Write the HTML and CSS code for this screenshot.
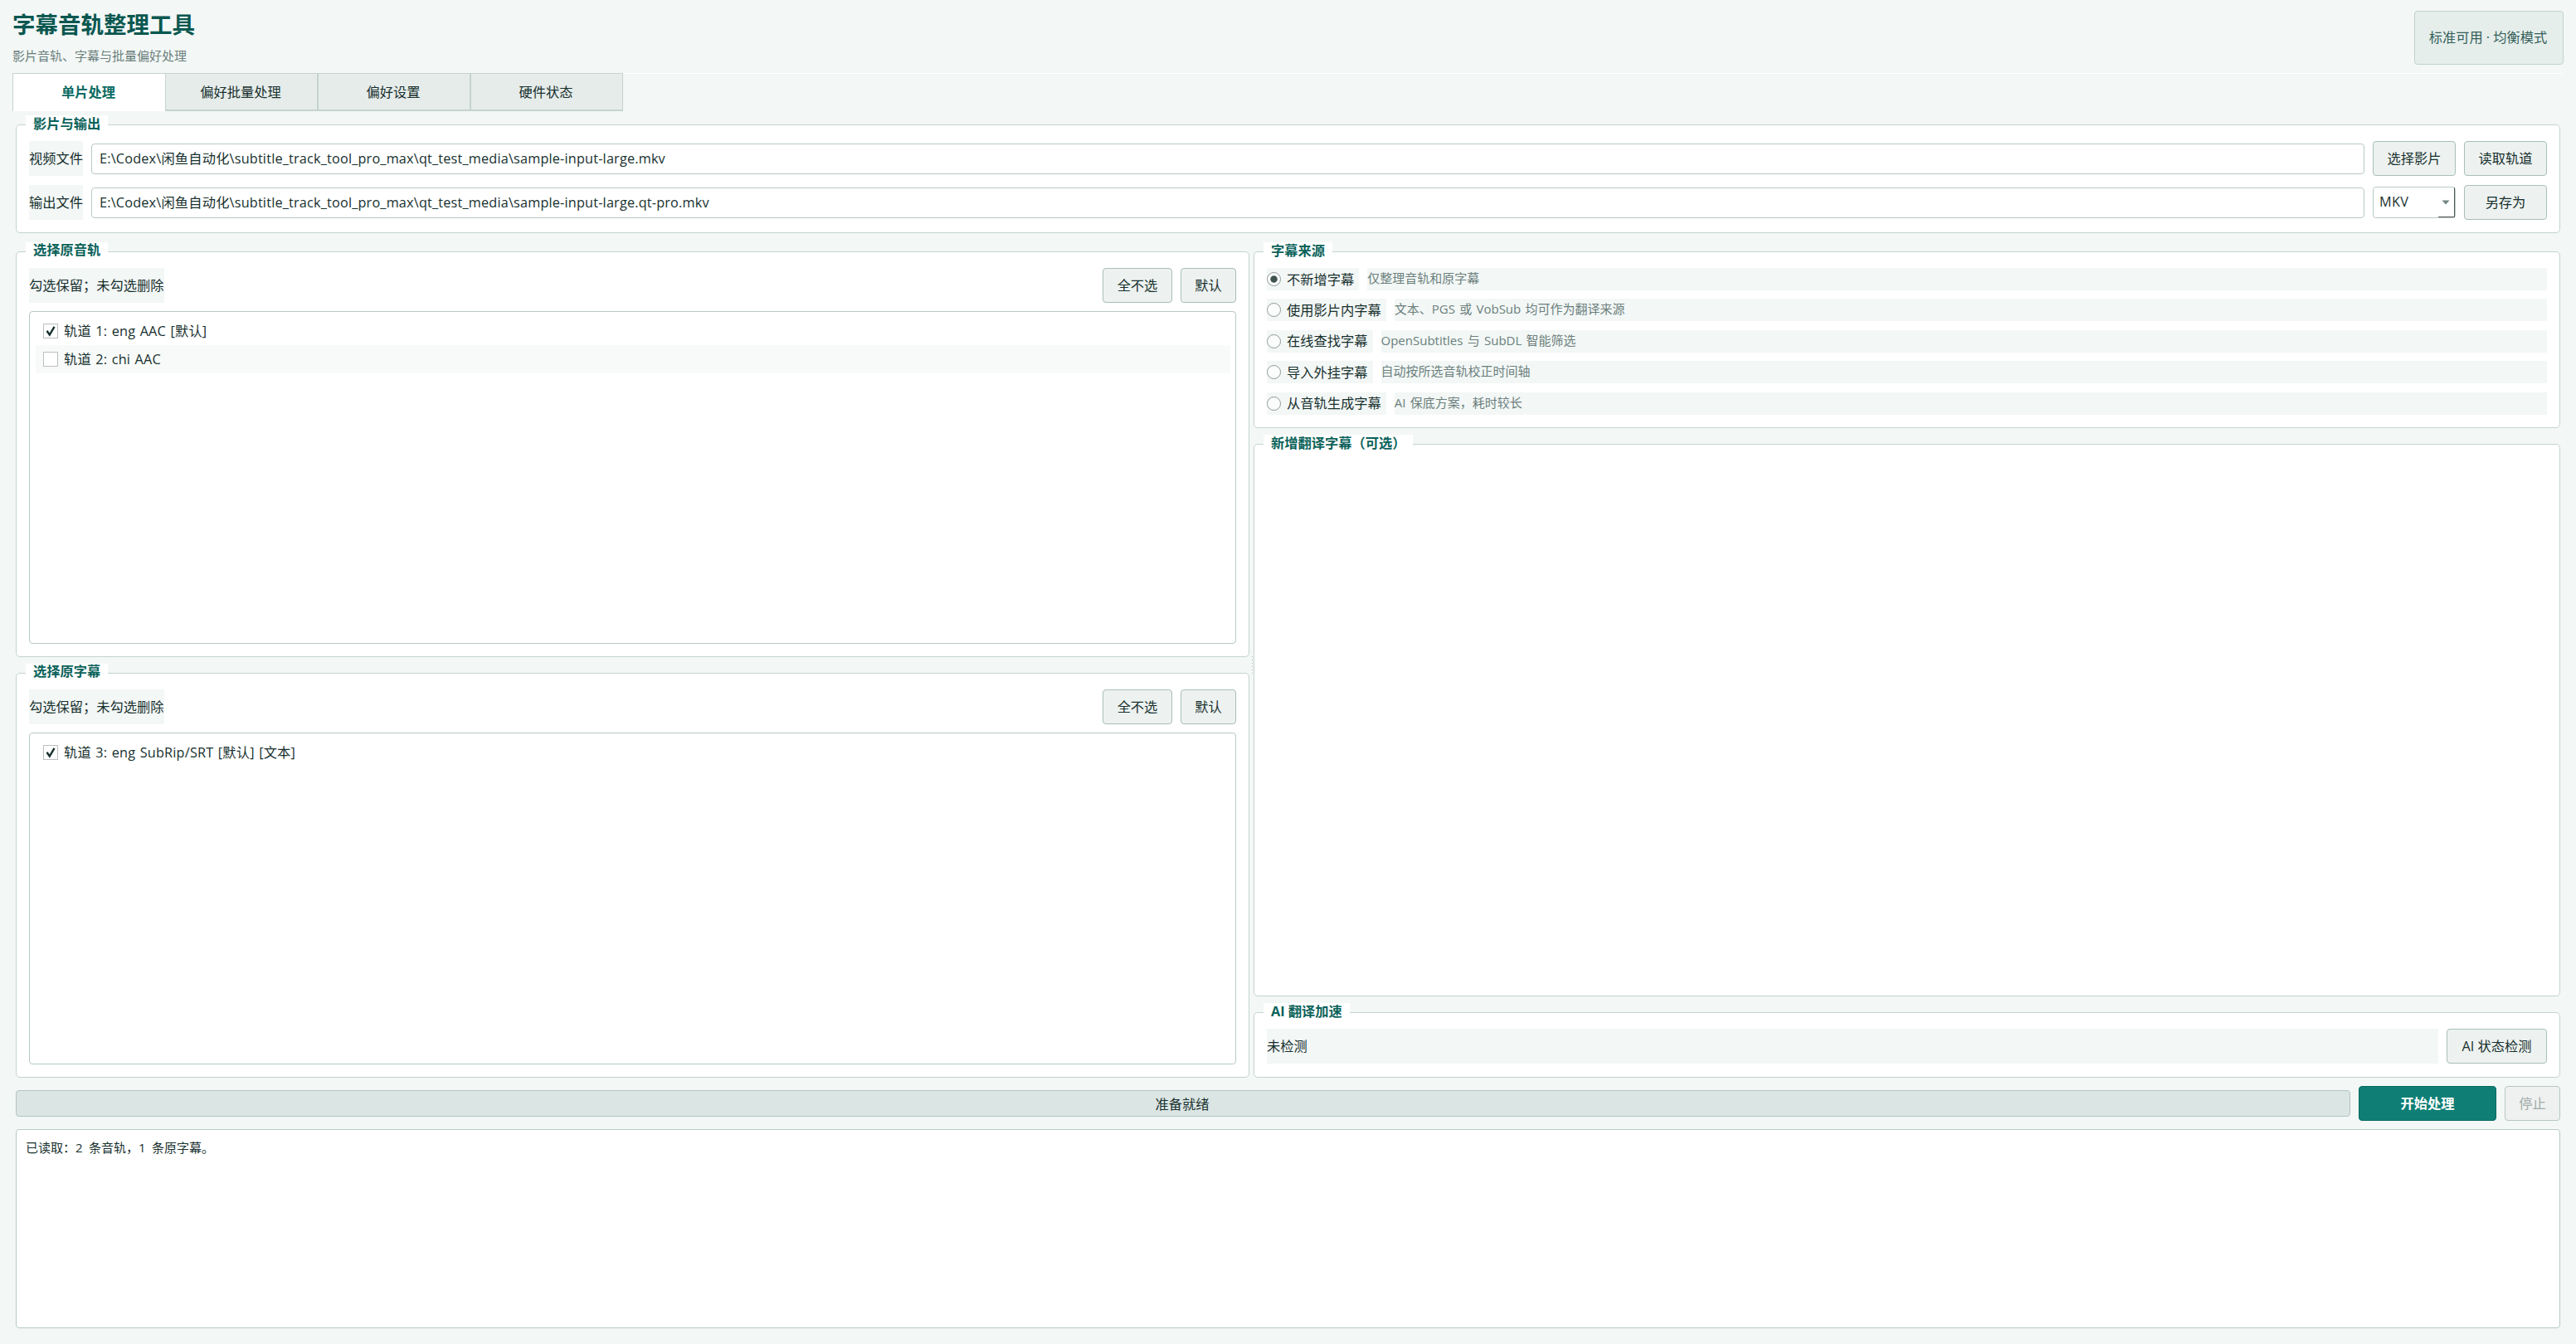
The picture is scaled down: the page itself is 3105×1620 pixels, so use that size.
FILE: index.html
```html
<!DOCTYPE html>
<html lang="zh-CN">
<head>
  <meta charset="UTF-8" />
  <meta name="viewport" content="width=device-width, initial-scale=1.0"/>
  <title>字幕音轨整理工具</title>
  <link rel="stylesheet" href="styles.css">
</head>
<body>
  <header class="header">
    <div>
      <h1>字幕音轨整理工具</h1>
      <p class="subtitle">影片音轨、字幕与批量偏好处理</p>
    </div>
    <div class="status">标准可用 · 均衡模式</div>
  </header>

  <nav class="tabs">
    <a class="tab active">单片处理</a>
    <a class="tab">偏好批量处理</a>
    <a class="tab">偏好设置</a>
    <a class="tab">硬件状态</a>
  </nav>

  <main>
    <section class="group files">
      <h2>影片与输出</h2>
      <label class="label">视频文件</label>
      <div class="field"><span class="path">E:\Codex\闲鱼自动化\subtitle_track_tool_pro_max\qt_test_media\sample-input-large.mkv</span></div>
      <button class="btn">选择影片</button>
      <button class="btn">读取轨道</button>
      <label class="label">输出文件</label>
      <div class="field"><span class="path">E:\Codex\闲鱼自动化\subtitle_track_tool_pro_max\qt_test_media\sample-input-large.qt-pro.mkv</span></div>
      <div class="combo">
        <span>MKV</span>
        <i class="combo-drop"><svg width="10" height="6" viewBox="0 0 10 6"><path d="M0.5 0.5h9L5 5.5z" fill="#6f8582"/></svg></i>
      </div>
      <button class="btn">另存为</button>
    </section>

    <div class="columns">
      <div class="col col-left">
        <section class="group tracks">
          <h2>选择原音轨</h2>
          <div class="row">
            <span class="label">勾选保留；未勾选删除</span>
            <button class="btn none">全不选</button>
            <button class="btn default">默认</button>
          </div>
          <ul class="list">
            <li><span class="check"><svg width="12" height="14" viewBox="0 0 12 14"><path d="M1.5 6.8l3.3 4.7L10.5 1.8" fill="none" stroke="#17302e" stroke-width="2.4"/></svg></span>轨道 1: eng AAC [默认]</li>
            <li><span class="check"></span>轨道 2: chi AAC</li>
          </ul>
        </section>
        <section class="group tracks">
          <h2>选择原字幕</h2>
          <div class="row">
            <span class="label">勾选保留；未勾选删除</span>
            <button class="btn none">全不选</button>
            <button class="btn default">默认</button>
          </div>
          <ul class="list">
            <li><span class="check"><svg width="12" height="14" viewBox="0 0 12 14"><path d="M1.5 6.8l3.3 4.7L10.5 1.8" fill="none" stroke="#17302e" stroke-width="2.4"/></svg></span>轨道 3: eng SubRip/SRT [默认] [文本]</li>
          </ul>
        </section>
      </div>

      <div class="splitter"></div>

      <div class="col col-right">
        <section class="group source">
          <h2>字幕来源</h2>
          <div class="option"><label class="radio checked"><i></i>不新增字幕</label><span class="hint">仅整理音轨和原字幕</span></div>
          <div class="option"><label class="radio"><i></i>使用影片内字幕</label><span class="hint">文本、PGS 或 VobSub 均可作为翻译来源</span></div>
          <div class="option"><label class="radio"><i></i>在线查找字幕</label><span class="hint">OpenSubtitles 与 SubDL 智能筛选</span></div>
          <div class="option"><label class="radio"><i></i>导入外挂字幕</label><span class="hint">自动按所选音轨校正时间轴</span></div>
          <div class="option"><label class="radio"><i></i>从音轨生成字幕</label><span class="hint">AI 保底方案，耗时较长</span></div>
        </section>
        <section class="group translate">
          <h2 class="wide">新增翻译字幕（可选）</h2>
        </section>
        <section class="group accel">
          <h2>AI 翻译加速</h2>
          <div class="row">
            <span class="label grow">未检测</span>
            <button class="btn detect">AI 状态检测</button>
          </div>
        </section>
      </div>
    </div>

    <div class="actions">
      <div class="progress">准备就绪</div>
      <button class="btn start">开始处理</button>
      <button class="btn stop" disabled>停止</button>
    </div>

    <div class="log">已读取：<b>2</b>条音轨，<b>1</b>条原字幕。</div>
  </main>
</body>
</html>
```
FILE: styles.css
```css
* {
  box-sizing: border-box;
}
body {
  margin: 0;
  width: 3105px;
  height: 1620px;
  overflow: hidden;
  background: #f3f7f6;
  color: #17302e;
  font-family: "Open Sans", "Noto Sans CJK SC", sans-serif;
  font-size: 16.25px;
  line-height: 24px;
}
h1, h2, p, ul {
  margin: 0;
  padding: 0;
}
.header {
  display: flex;
  justify-content: space-between;
  height: 88px;
  padding: 13px 15px 0;
}
h1 {
  font-size: 27.5px;
  line-height: 34px;
  color: #0b5750;
}
.subtitle {
  margin-top: 8px;
  font-size: 15px;
  color: #6b7f7c;
}
.status {
  width: 180px;
  height: 65px;
  padding-right: 2px;
  border: 1px solid #c0d2ce;
  border-radius: 4px;
  background: #e5eeeb;
  color: #355f5a;
  line-height: 63px;
  text-align: center;
}

.tabs {
  display: flex;
  height: 46px;
  margin: 0 15px;
  background: linear-gradient(#fff, #fff) no-repeat 0 0 / 100% 1px;
}
.tab {
  width: 184px;
  padding-right: 2px;
  border: 1px solid #c5d3d0;
  border-bottom-width: 2px;
  background: #e6ecea;
  line-height: 45px;
  text-align: center;
}
.tab.active {
  background: #fff;
  border-right: none;
  border-bottom: none;
  color: #0b6b62;
  font-weight: bold;
}

main {
  padding: 16px 19px 0;
}
.group {
  position: relative;
  border: 1px solid #c3d4d0;
  border-radius: 5px;
  background: #fff;
  padding: 19px 15px 15px;
}
/* group title sits on top of the border */
.group h2 {
  position: absolute;
  top: -12px;
  left: 11px;
  height: 21px;
  padding: 0 9px;
  background: #fff;
  color: #0b625a;
  font-size: 16.25px;
  line-height: 20px;
  white-space: nowrap;
}
.group h2.wide {
  width: 180px;
}
.tracks h2 {
  line-height: 19px;
}

.label {
  height: 42px;
  background: #f3f7f6;
  line-height: 42px;
  white-space: nowrap;
}
.grow {
  flex: 1;
}
.btn {
  height: 42px;
  padding: 0;
  border: 1px solid #a9beb9;
  border-radius: 4px;
  background: #edf2f0;
  color: #17302e;
  font: inherit;
  white-space: nowrap;
}

.files {
  display: grid;
  grid-template-columns: 65px 1fr 100px 100px;
  gap: 11px 10px;
  align-items: center;
  height: 131px;
}
.field, .combo {
  height: 37px;
  border: 1px solid #b8cac6;
  border-radius: 4px;
  background: #fff;
  padding: 0 9px;
  line-height: 35px;
}
.path {
  letter-spacing: 0.18px;
}
.combo {
  position: relative;
  height: 38px;
  padding: 0 7px;
  letter-spacing: 0.3px;
}
.combo-drop {
  position: absolute;
  right: 0;
  top: 0;
  width: 20px;
  height: 36px;
  border-right: 1px solid #505655;
  border-bottom: 1px solid #505655;
}
.combo-drop svg {
  position: absolute;
  left: 4px;
  top: 15px;
}

.columns {
  display: flex;
  height: 996px;
  margin-top: 22px;
}
.col {
  display: flex;
  flex-direction: column;
}
.col-left {
  width: 1487px;
  gap: 19px;
}
.col-right {
  flex: 1;
  gap: 19px;
}
.splitter {
  width: 5px;
  display: flex;
  align-items: center;
  justify-content: flex-end;
  padding-right: 1px;
}
.splitter::after {
  content: "";
  width: 1px;
  height: 21px;
  background: repeating-linear-gradient(#a9b3b1 0 1px, transparent 1px 4px);
}

.tracks {
  flex: 1;
  display: flex;
  flex-direction: column;
  gap: 10px;
}
.row {
  display: flex;
  gap: 10px;
}
.none {
  width: 84px;
  margin-left: auto;
}
.default {
  width: 67px;
}
.list {
  flex: 1;
  border: 1px solid #b8cac6;
  border-radius: 4px;
  padding: 6px 6px 6px 7px;
  list-style: none;
  letter-spacing: 0.2px;
  word-spacing: 1px;
}
.list li {
  display: flex;
  align-items: center;
  height: 34px;
  padding-left: 9px;
}
.list li:nth-child(even) {
  background: #f8faf9;
}
.check {
  display: flex;
  align-items: center;
  justify-content: center;
  width: 18px;
  height: 18px;
  margin-right: 7px;
  border: 1px solid #bcbfbf;
  background: #fff;
}

.source {
  height: 213px;
  display: flex;
  flex-direction: column;
  gap: 10.4px;
}
.option {
  display: flex;
  gap: 10px;
  height: 27px;
  line-height: 26px;
}
.radio {
  display: flex;
  align-items: center;
  padding-right: 6px;
  background: #f3f7f6;
}
.radio i {
  width: 17px;
  height: 17px;
  margin-right: 7px;
  border: 1px solid #8f9997;
  border-radius: 50%;
  background: #fbfcfc;
}
.radio.checked i {
  background: radial-gradient(circle, #3f5451 3.8px, #fbfcfc 4.6px);
}
.hint {
  flex: 1;
  background: #f3f7f6;
  color: #6b7f7c;
  font-size: 15px;
  line-height: 25px;
  word-spacing: 1.4px;
}
.translate {
  flex: 1;
}
.accel {
  height: 79px;
}
.detect {
  width: 121px;
}

.actions {
  display: flex;
  align-items: center;
  gap: 10px;
  margin-top: 10px;
}
.progress {
  flex: 1;
  height: 32px;
  padding-right: 2px;
  border: 1px solid #b3c5c1;
  border-radius: 4px;
  background: #dbe5e3;
  line-height: 32px;
  text-align: center;
}
.start {
  width: 166px;
  border-color: #0a6a62;
  background: #0f7f76;
  color: #fff;
  font-weight: bold;
}
.stop {
  width: 67px;
  background: #eff1f0;
  border-color: #b7c7c3;
  color: #a0abaa;
}
.log {
  height: 240px;
  margin-top: 10px;
  padding: 9px 11px;
  border: 1px solid #b8cac6;
  border-radius: 4px;
  background: #fff;
  font-size: 15px;
}
.log b {
  display: inline-block;
  width: 16px;
  font-weight: normal;
}
```
